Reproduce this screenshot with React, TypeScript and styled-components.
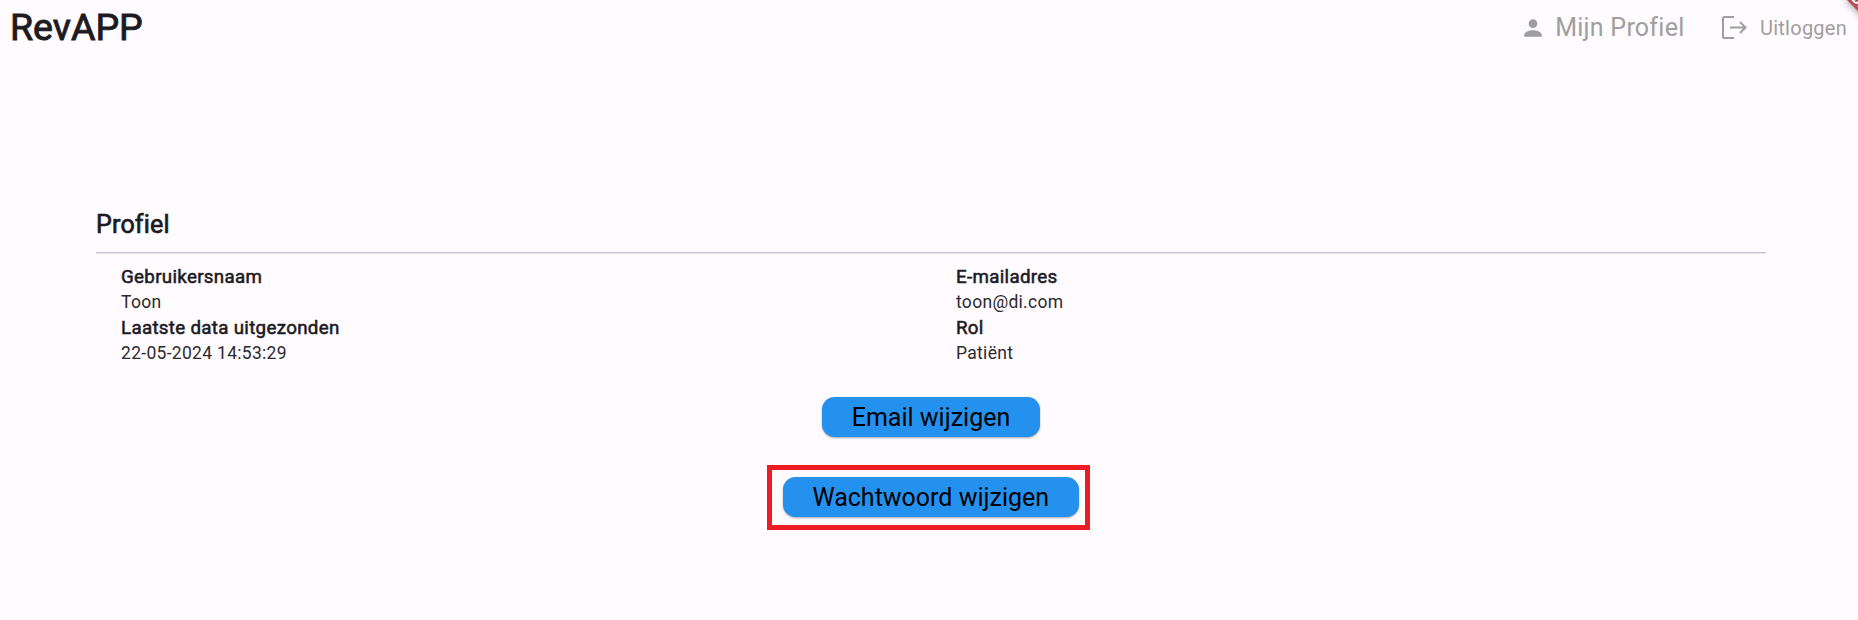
import React from 'react';
import styled, { createGlobalStyle } from 'styled-components';

const GlobalStyle = createGlobalStyle`
  *, *::before, *::after { box-sizing: border-box; }
  body {
    margin: 0;
    background: #fffbff;
    color: #1c1b1f;
    font-family: Roboto, "Liberation Sans", sans-serif;
    overflow: hidden;
  }
`;

const Page = styled.div`
  position: relative;
  height: 620px;
  overflow: hidden;
`;

const Header = styled.header`
  display: flex;
  align-items: center;
  justify-content: space-between;
  height: 55px;
  padding: 0 11px 0 10px;
`;

const Brand = styled.h1`
  margin: 0;
  font-size: 37.5px;
  font-weight: 400;
  -webkit-text-stroke: 0.9px currentColor;
  line-height: 55px;
`;

const Nav = styled.nav`
  display: flex;
  align-items: center;
  gap: 38px;
  color: #9e9e9e;
`;

const NavItem = styled.a<{ $size: number; $spacing: number; $gap: number; $drop?: number }>`
  display: flex;
  align-items: center;
  gap: ${(p) => p.$gap}px;
  font-size: ${(p) => p.$size}px;
  letter-spacing: ${(p) => p.$spacing}px;
  line-height: 55px;

  span {
    padding-top: ${(p) => p.$drop ?? 0}px;
  }
`;

const Ribbon = styled.div`
  position: absolute;
  top: -15px;
  left: 1847px;
  width: 60px;
  height: 15px;
  padding-left: 3px;
  transform: rotate(45deg);
  transform-origin: 0 100%;
  background: #b94a4d;
  box-shadow: 0 0 8px rgba(0, 0, 0, 0.5);
  color: #fff;
  font-size: 12.75px;
  font-weight: 900;
  line-height: 15px;
`;

const Profile = styled.main`
  display: flex;
  flex-direction: column;
  margin: 150px 92px 0 96px;
`;

const Title = styled.h2`
  margin: 0;
  font-size: 25px;
  font-weight: 400;
  -webkit-text-stroke: 0.7px currentColor;
  letter-spacing: 0.2px;
  line-height: 38px;
  padding-top: 1px;
`;

const Divider = styled.hr`
  width: 100%;
  height: 2px;
  margin: 8px 0 10px;
  border: 0;
  background: linear-gradient(#cac4d0 50%, #e6e1e8 50%);
`;

const Details = styled.dl`
  display: grid;
  grid-template-columns: 1fr 1fr;
  margin: 0;
  padding-left: 25px;
  column-gap: 25px;
`;

const Field = styled.div`
  display: flex;
  flex-direction: column;
  height: 51px;
`;

const Label = styled.dt`
  font-size: 18.75px;
  font-weight: 400;
  -webkit-text-stroke: 0.55px currentColor;
  letter-spacing: 0.3px;
  line-height: 26px;
`;

const Value = styled.dd`
  margin: 0;
  color: #2b2a2e;
  font-size: 17.5px;
  letter-spacing: 0.3px;
  line-height: 25px;
`;

const Actions = styled.div`
  display: flex;
  flex-direction: column;
  align-items: center;
  gap: 28.5px;
  margin-top: 30.5px;
`;

const Button = styled.button<{ $width: number }>`
  flex: none;
  width: ${(p) => p.$width}px;
  height: 40px;
  padding: 2px 0 0;
  border: 0;
  border-radius: 12.5px;
  background: #2491ef;
  color: #000;
  font: 400 25px/38px Roboto, "Liberation Sans", sans-serif;
  box-shadow: 0 1px 2px rgba(0, 0, 0, 0.35);
`;

const Highlight = styled.div`
  display: flex;
  width: 323px;
  height: 65px;
  padding: 6.5px 0 0 10.5px;
  margin-right: 5px;
  border: 5px solid #ed1c24;
`;

const fields = [
  ['Gebruikersnaam', 'Toon'],
  ['E-mailadres', 'toon@di.com'],
  ['Laatste data uitgezonden', '22-05-2024 14:53:29'],
  ['Rol', 'Patiënt'],
];

const PersonIcon = () => (
  <svg width="26" height="26" viewBox="0 0 24 24" fill="currentColor">
    <path d="M12 12c2.21 0 4-1.79 4-4s-1.79-4-4-4-4 1.79-4 4 1.79 4 4 4zm0 2c-2.67 0-8 1.34-8 4v2h16v-2c0-2.66-5.33-4-8-4z" />
  </svg>
);

const LogoutIcon = () => (
  <svg width="25" height="23" viewBox="0 0 25 23" fill="none" stroke="currentColor" strokeWidth="2">
    <path d="M12 1H2.5A1.5 1.5 0 0 0 1 2.5v18A1.5 1.5 0 0 0 2.5 22H12M8 11.5h15M18 6l5.5 5.5L18 17" />
  </svg>
);

export default function App() {
  return (
    <Page>
      <GlobalStyle />
      <Header>
        <Brand>RevAPP</Brand>
        <Nav>
          <NavItem $size={25} $spacing={0.25} $gap={9}><PersonIcon /><span>Mijn Profiel</span></NavItem>
          <NavItem $size={20} $spacing={0.25} $gap={12.5} $drop={2}><LogoutIcon /><span>Uitloggen</span></NavItem>
        </Nav>
      </Header>
      <Ribbon>DEBUG</Ribbon>
      <Profile>
        <Title>Profiel</Title>
        <Divider />
        <Details>
          {fields.map(([label, value]) => (
            <Field key={label}>
              <Label>{label}</Label>
              <Value>{value}</Value>
            </Field>
          ))}
        </Details>
        <Actions>
          <Button $width={218}>Email wijzigen</Button>
          <Highlight>
            <Button $width={296.5}>Wachtwoord wijzigen</Button>
          </Highlight>
        </Actions>
      </Profile>
    </Page>
  );
}
